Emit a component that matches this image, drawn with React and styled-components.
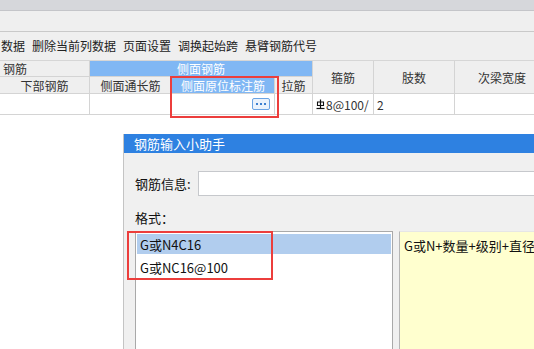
import React from 'react'
import styled, { createGlobalStyle } from 'styled-components'

const GlobalStyle = createGlobalStyle`
  html, body {
    margin: 0;
    padding: 0;
    background: #ffffff;
  }
  body {
    font-family: "Noto Sans CJK SC", "Noto Sans", sans-serif;
    color: #333;
  }
`

const Page = styled.div`
  position: relative;
  width: 534px;
  height: 349px;
  overflow: hidden;
  background: #fff;
`

const TitleStrip = styled.div`
  height: 10px;
  background: #d6d7db;
  border-bottom: 1px solid #c4c5c9;
`

const RibbonArea = styled.div`
  height: 20px;
  background: #efefef;
  border-bottom: 1px solid #c9c9c9;
`

const Toolbar = styled.div`
  display: flex;
  align-items: center;
  gap: 7px;
  height: 28px;
  padding-left: 1px;
  background: #efefef;
  border-bottom: 1px solid #d6d6d6;
  font-size: 12px;
  color: #222;
  white-space: nowrap;
`

const ToolItem = styled.span`
  line-height: 28px;
`

const Grid = styled.div`
  display: grid;
  grid-template-columns: 90px 82px 103px 38px 61px 81px 110px;
  grid-template-rows: 16px 17px 21px;
  width: 565px;
  font-size: 12px;
`

const Cell = styled.div`
  box-sizing: border-box;
  display: flex;
  align-items: center;
  justify-content: ${({ $align }) => $align || 'center'};
  padding: ${({ $align }) => ($align === 'flex-start' ? '0 0 0 3px' : '0')};
  border-right: 1px solid #d4d4d4;
  border-bottom: 1px solid #d4d4d4;
  background: ${({ $tone }) =>
    $tone === 'blue' ? '#80b7f4' : $tone === 'white' ? '#ffffff' : '#efefef'};
  color: ${({ $tone }) => ($tone === 'blue' ? '#ffffff' : '#333')};
  white-space: nowrap;
  overflow: hidden;
  grid-column: ${({ $col }) => $col || 'auto'};
  grid-row: ${({ $row }) => $row || 'auto'};
`

const WideHeading = styled.span`
  padding-left: 20px;
`

const DotsButton = styled.span`
  box-sizing: border-box;
  display: flex;
  align-items: center;
  justify-content: center;
  gap: 2px;
  width: 18px;
  height: 12px;
  margin-left: auto;
  margin-right: 4px;
  border: 1px solid #6aa3e4;
  border-radius: 2px;
  background: #eaf2fc;
`

const Dot = styled.i`
  width: 2px;
  height: 2px;
  background: #3c7fd0;
`

const Highlight = styled.div`
  position: absolute;
  left: ${({ $x }) => $x}px;
  top: ${({ $y }) => $y}px;
  width: ${({ $w }) => $w}px;
  height: ${({ $h }) => $h}px;
  box-sizing: border-box;
  border: 2px solid #ec3e3c;
  pointer-events: none;
  z-index: 5;
`

const Dialog = styled.div`
  position: absolute;
  left: 123px;
  top: 134px;
  width: 430px;
  height: 230px;
  display: flex;
  flex-direction: column;
  background: #f0f0f0;
  border-left: 1px solid #c4c4c4;
`

const DialogTitle = styled.div`
  height: 27px;
  display: flex;
  align-items: center;
  padding-left: 10px;
  background: #2e81e1;
  color: #ffffff;
  font-size: 13px;
`

const DialogBody = styled.div`
  display: flex;
  flex-direction: column;
  padding: 18px 0 0 11px;
`

const FieldRow = styled.div`
  display: flex;
  align-items: center;
  gap: 7px;
  font-size: 13px;
  color: #111;
`

const TextInput = styled.div`
  flex: 1;
  height: 25px;
  box-sizing: border-box;
  border: 1px solid #c6c8cc;
  background: #fff;
`

const SectionLabel = styled.div`
  margin-top: 12px;
  font-size: 13px;
  color: #111;
`

const Panels = styled.div`
  display: flex;
  gap: 6px;
  margin-top: 4px;
  height: 140px;
`

const ListBox = styled.div`
  width: 258px;
  box-sizing: border-box;
  padding: 2px 1px;
  background: #fff;
  border: 1px solid #a9a9a9;
  border-bottom: none;
`

const ListItem = styled.div`
  height: 20px;
  display: flex;
  align-items: center;
  padding-left: 3px;
  margin-bottom: 3px;
  font-size: 13px;
  color: #111;
  background: ${({ $selected }) => ($selected ? '#b1cdee' : 'transparent')};
`

const HintBox = styled.div`
  flex: 1;
  box-sizing: border-box;
  padding: 4px 4px;
  background: #ffffcf;
  border-left: 1px solid #b5b5b5;
  border-top: 1px solid #e6e6e6;
  font-size: 13px;
  color: #111;
  white-space: nowrap;
`

const RebarGlyph = () => (
  <svg width="9" height="11" viewBox="0 0 9 11" style={{ marginRight: 1 }}>
    <path d="M4.5 0.5 V9" stroke="#111" strokeWidth="1.2" fill="none" />
    <path d="M1.5 3 H7.5 V6.5 H1.5 Z" stroke="#111" strokeWidth="1.1" fill="none" />
    <path d="M0.5 9.5 H8.5" stroke="#111" strokeWidth="1.2" />
  </svg>
)

const toolItems = ['数据', '删除当前列数据', '页面设置', '调换起始跨', '悬臂钢筋代号']

const App = () => {
  return (
    <Page>
      <GlobalStyle />
      <TitleStrip />
      <RibbonArea />
      <Toolbar>
        {toolItems.map((t) => (
          <ToolItem key={t}>{t}</ToolItem>
        ))}
      </Toolbar>
      <Grid>
        <Cell $col="1" $row="1" $align="flex-start">钢筋</Cell>
        <Cell $col="2 / span 3" $row="1" $tone="blue">侧面钢筋</Cell>
        <Cell $col="5" $row="1 / span 2">箍筋</Cell>
        <Cell $col="6" $row="1 / span 2">肢数</Cell>
        <Cell $col="7" $row="1 / span 2" $align="flex-start">
          <WideHeading>次梁宽度</WideHeading>
        </Cell>
        <Cell $col="1" $row="2">下部钢筋</Cell>
        <Cell $col="2" $row="2">侧面通长筋</Cell>
        <Cell $col="3" $row="2" $tone="blue">侧面原位标注筋</Cell>
        <Cell $col="4" $row="2">拉筋</Cell>
        <Cell $tone="white" />
        <Cell $tone="white" />
        <Cell $tone="white">
          <DotsButton>
            <Dot />
            <Dot />
            <Dot />
          </DotsButton>
        </Cell>
        <Cell $tone="white" />
        <Cell $tone="white" $align="flex-start">
          <RebarGlyph />8@100/
        </Cell>
        <Cell $tone="white" $align="flex-start">2</Cell>
        <Cell $tone="white" />
      </Grid>
      <Highlight $x={170} $y={76} $w={109} $h={42} />
      <Dialog>
        <DialogTitle>钢筋输入小助手</DialogTitle>
        <DialogBody>
          <FieldRow>
            <span>钢筋信息:</span>
            <TextInput />
          </FieldRow>
          <SectionLabel>格式：</SectionLabel>
          <Panels>
            <ListBox>
              <ListItem $selected>G或N4C16</ListItem>
              <ListItem>G或NC16@100</ListItem>
            </ListBox>
            <HintBox>G或N+数量+级别+直径</HintBox>
          </Panels>
        </DialogBody>
      </Dialog>
      <Highlight $x={127} $y={231} $w={146} $h={49} />
    </Page>
  )
}

export default App
